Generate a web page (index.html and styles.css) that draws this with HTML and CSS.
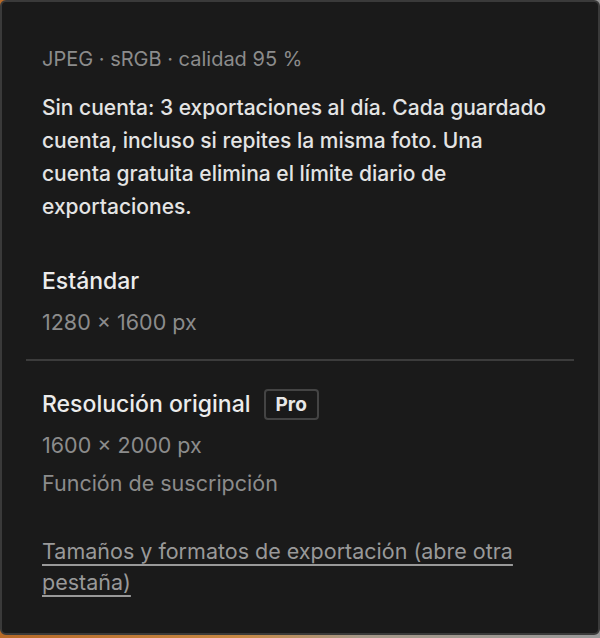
FILE: index.html
```html
<!DOCTYPE html>
<html lang="es">
<head>
<meta charset="utf-8">
<link rel="stylesheet" href="styles.css">
</head>
<body>
<div class="panel">
  <div class="section intro">
    <p class="meta">JPEG · sRGB · calidad 95 %</p>
    <p class="note">Sin cuenta: 3 exportaciones al día. Cada guardado cuenta, incluso si repites la misma foto. Una cuenta gratuita elimina el límite diario de exportaciones.</p>
  </div>
  <div class="section option standard">
    <div class="title">Estándar</div>
    <div class="sub">1280 × 1600 px</div>
  </div>
  <div class="section option pro-option">
    <div class="title">Resolución original <span class="badge">Pro</span></div>
    <div class="sub">1600 × 2000 px</div>
    <div class="sub">Función de suscripción</div>
  </div>
  <div class="section footer">
    <a class="link" href="#">Tamaños y formatos de exportación (abre otra pestaña)</a>
  </div>
</div>
</body>
</html>
```
FILE: styles.css
```css
html, body {
  margin: 0;
  padding: 0;
}
body {
  width: 600px;
  height: 638px;
  background: linear-gradient(90deg, #b86a28 0%, #c98a45 40%, #a89a8a 60%, #9a9a9a 100%);
  font-family: Inter, "Noto Sans", sans-serif;
  overflow: hidden;
}
.panel {
  box-sizing: border-box;
  width: 600px;
  height: 635px;
  background: #1a1a1a;
  border: 2px solid #3a3a3a;
  border-radius: 6px;
  padding: 43px 24px 0;
}
.section {
  padding: 0 16px;
}
p { margin: 0; }
.meta {
  font-size: 20px;
  line-height: 28px;
  color: #8c8c8c;
}
.note {
  max-width: 510px;
  margin-top: 18px;
  font-size: 21px;
  line-height: 33px;
  color: #e4e4e4;
  font-weight: 500;
}
.standard {
  padding-top: 42px;
  padding-bottom: 18px;
  border-bottom: 2px solid #3c3c3c;
}
.title {
  font-size: 23px;
  line-height: 32px;
  color: #ececec;
  font-weight: 500;
  display: flex;
  align-items: center;
  gap: 13px;
  margin-bottom: 6px;
}
.sub {
  font-size: 21.5px;
  line-height: 38px;
  color: #8c8c8c;
}
.pro-option {
  padding-top: 27px;
}
.badge {
  box-sizing: border-box;
  height: 31px;
  padding: 0 10px;
  border: 2px solid #444;
  border-radius: 4px;
  font-size: 19px;
  font-weight: 700;
  line-height: 27px;
  color: #e8e8e8;
}
.footer {
  padding-top: 34px;
}
.link {
  font-size: 21.5px;
  line-height: 31px;
  color: #999;
  text-decoration: underline;
  text-decoration-thickness: 2px;
  text-underline-offset: 5px;
}
```
